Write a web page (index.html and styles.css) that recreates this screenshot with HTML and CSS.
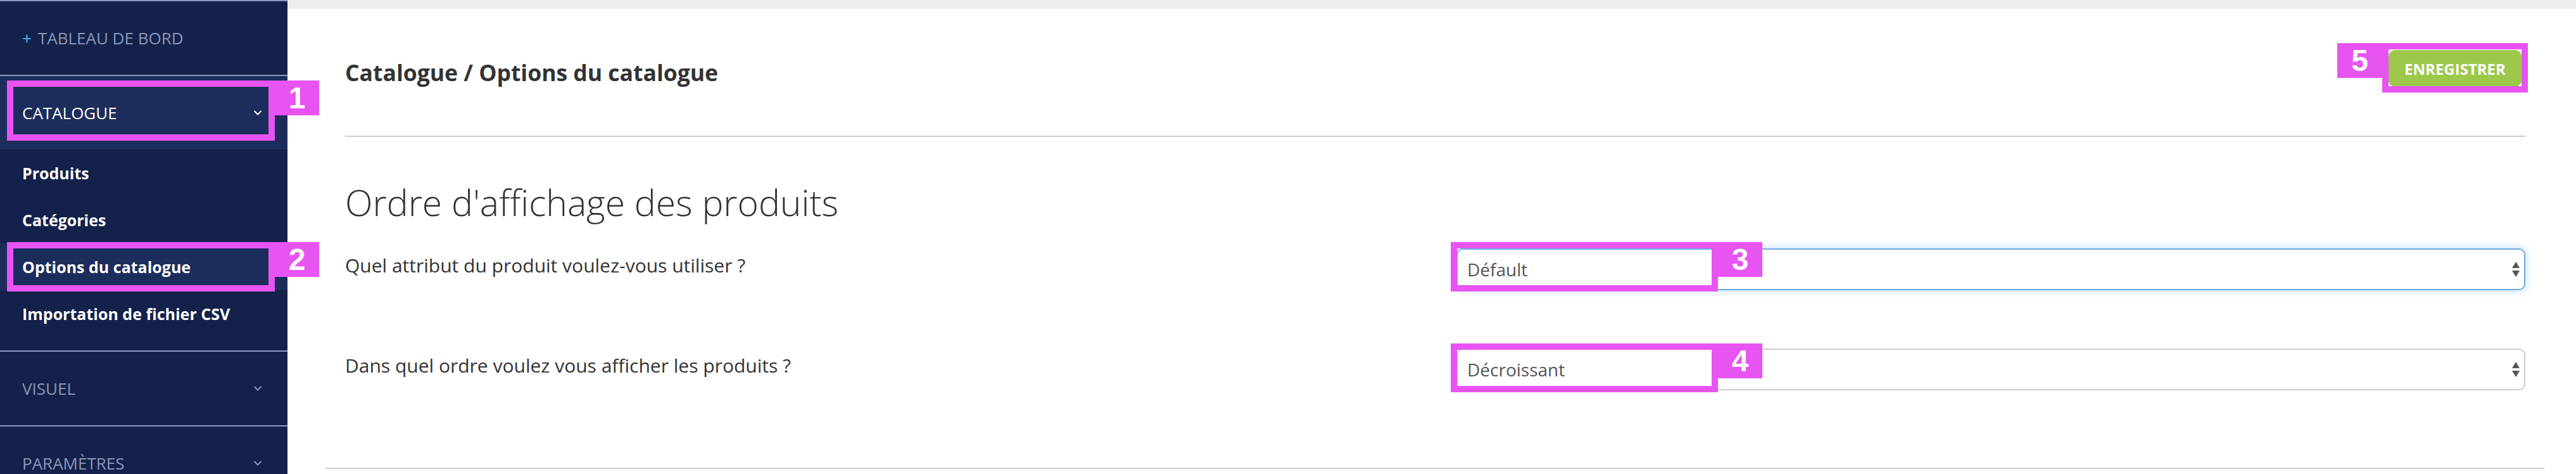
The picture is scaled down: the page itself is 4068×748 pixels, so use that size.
FILE: index.html
```html
<!DOCTYPE html>
<html lang="fr">
<head>
  <meta charset="UTF-8" />
  <title>Catalogue / Options du catalogue</title>
  <link rel="stylesheet" href="styles.css">
</head>
<body>

  <div class="page">
    <aside class="sidebar">
      <div class="nav-top"><span class="plus">+</span> TABLEAU DE BORD</div>

      <div class="nav-group open">
        <div class="nav-head">
          <span>CATALOGUE</span>
          <svg class="chevron" width="14" height="10" viewBox="0 0 14 10"><polyline points="1.5,2 7,7.5 12.5,2" /></svg>
        </div>
        <ul class="nav-sub">
          <li>Produits</li>
          <li>Catégories</li>
          <li class="active">Options du catalogue</li>
          <li>Importation de fichier CSV</li>
        </ul>
      </div>

      <div class="nav-group">
        <div class="nav-head">
          <span>VISUEL</span>
          <svg class="chevron" width="14" height="10" viewBox="0 0 14 10"><polyline points="1.5,2 7,7.5 12.5,2" /></svg>
        </div>
      </div>

      <div class="nav-group">
        <div class="nav-head">
          <span>PARAMÈTRES</span>
          <svg class="chevron" width="14" height="10" viewBox="0 0 14 10"><polyline points="1.5,2 7,7.5 12.5,2" /></svg>
        </div>
      </div>
    </aside>

    <main class="content">
      <div class="topbar"></div>

      <div class="inner">
        <div class="page-header">
          <h1>Catalogue / Options du catalogue</h1>
          <button class="btn-save">ENREGISTRER</button>
        </div>

        <h2>Ordre d'affichage des produits</h2>

        <div class="form-row">
          <label>Quel attribut du produit voulez-vous utiliser ?</label>
          <div class="select-wrap focus">
            <select>
              <option>Défault</option>
            </select>
            <svg class="arrows" width="12" height="25" viewBox="0 0 12 25"><polygon points="6,0 12,10 0,10" /><polygon points="0,14 12,14 6,24" /></svg>
          </div>
        </div>

        <div class="form-row">
          <label>Dans quel ordre voulez vous afficher les produits ?</label>
          <div class="select-wrap">
            <select>
              <option>Décroissant</option>
            </select>
            <svg class="arrows" width="12" height="25" viewBox="0 0 12 25"><polygon points="6,0 12,10 0,10" /><polygon points="0,14 12,14 6,24" /></svg>
          </div>
        </div>

        <hr class="section-end">
      </div>
    </main>

    <!-- annotation marks -->
    <div class="mark mark-1"><span class="mark-num">1</span></div>
    <div class="mark mark-2"><span class="mark-num">2</span></div>
    <div class="mark mark-3"><span class="mark-num">3</span></div>
    <div class="mark mark-4"><span class="mark-num">4</span></div>
    <div class="mark mark-5"><span class="mark-num left">5</span></div>
  </div>

</body>
</html>
```

FILE: styles.css
```css
* {
  box-sizing: border-box;
}
body {
  margin: 0;
  font-family: "Open Sans", "Liberation Sans", sans-serif;
  background: #ffffff;
  color: #333333;
}
.page {
  position: relative;
  display: flex;
  height: 748px;
  overflow: hidden;
}

/* sidebar */
.sidebar {
  width: 454px;
  flex-shrink: 0;
  background-color: #14214a;
  border-top: 2px solid #8898bd;
}
.nav-top {
  height: 118px;
  display: flex;
  align-items: center;
  padding-left: 35px;
  font-size: 26px;
  color: #8a97b8;
  border-bottom: 2px solid #8898bd;
}
.nav-top .plus {
  color: #4fb4e8;
  margin-right: 10px;
}
.nav-group + .nav-group {
  border-top: 2px solid #8898bd;
}
.nav-head {
  height: 116px;
  display: flex;
  align-items: center;
  justify-content: space-between;
  padding: 0 40px 0 35px;
  font-size: 26px;
  color: #8a97b8;
}
.chevron polyline {
  fill: none;
  stroke: currentColor;
  stroke-width: 2;
}
.nav-group.open .nav-head {
  background-color: #1d2d5b;
  color: #ffffff;
}
.nav-sub {
  list-style: none;
  margin: 0;
  padding: 0 0 21px 0;
}
.nav-sub li {
  height: 74px;
  line-height: 74px;
  padding-left: 35px;
  font-size: 25px;
  font-weight: 700;
  color: #ffffff;
}
.nav-sub li.active {
  background-color: #1d2d5b;
}

/* main */
.content {
  flex: 1;
}
.topbar {
  height: 14px;
  background-color: #ededed;
}
.inner {
  padding: 0 80px 0 91px;
}
.page-header {
  display: flex;
  align-items: center;
  justify-content: space-between;
  padding: 64px 0 76px;
  border-bottom: 2px solid #cccccc;
}
.page-header h1 {
  margin: 0;
  padding-top: 12px;
  font-size: 35.5px;
  font-weight: 700;
  color: #333333;
}
.btn-save {
  width: 210px;
  height: 58px;
  margin-right: 6px;
  border: none;
  border-radius: 10px;
  background-color: #9dc84c;
  color: #ffffff;
  font-family: "Open Sans", sans-serif;
  font-size: 24px;
  font-weight: 700;
}
h2 {
  margin: 64px 0 34px;
  font-size: 57px;
  font-weight: 300;
  color: #333333;
}
.form-row {
  display: grid;
  grid-template-columns: 1755px 1fr;
  margin-bottom: 92px;
}
.form-row label {
  padding-top: 6px;
  font-size: 30px;
  font-weight: 400;
  color: #333333;
}
.select-wrap {
  position: relative;
}
.select-wrap select {
  width: 100%;
  height: 66px;
  padding: 0 15px;
  border: 2px solid #cccccc;
  border-radius: 10px;
  background: #ffffff;
  appearance: none;
  -webkit-appearance: none;
  font-family: "Open Sans", sans-serif;
  font-size: 28px;
  color: #555555;
}
.select-wrap.focus select {
  border-color: #6fa9e2;
  box-shadow: 0 0 14px rgba(102, 175, 233, 0.45);
}
.arrows {
  position: absolute;
  right: 9px;
  top: 21px;
  fill: #555555;
}
.section-end {
  margin: 122px -30px 0 -31px;
  border: none;
  border-top: 2px solid #cccccc;
}

/* annotation marks */
.mark {
  position: absolute;
  border: 10px solid #e754f2;
}
.mark-num {
  position: absolute;
  top: -10px;
  left: calc(100% + 10px);
  width: 70px;
  height: 55px;
  background-color: #e754f2;
  color: #ffffff;
  font-family: "Liberation Sans", Arial, sans-serif;
  font-weight: 700;
  font-size: 48px;
  line-height: 55px;
  text-align: center;
}
.mark-num.left {
  left: auto;
  right: calc(100% + 10px);
  width: 71px;
}
.mark-1 { left: 11px; top: 127px; width: 423px; height: 95px; }
.mark-2 { left: 11px; top: 382px; width: 423px; height: 78px; }
.mark-3 { left: 2291px; top: 382px; width: 422px; height: 78px; }
.mark-4 { left: 2291px; top: 542px; width: 422px; height: 77px; }
.mark-5 { left: 3762px; top: 68px; width: 230px; height: 78px; }
```
